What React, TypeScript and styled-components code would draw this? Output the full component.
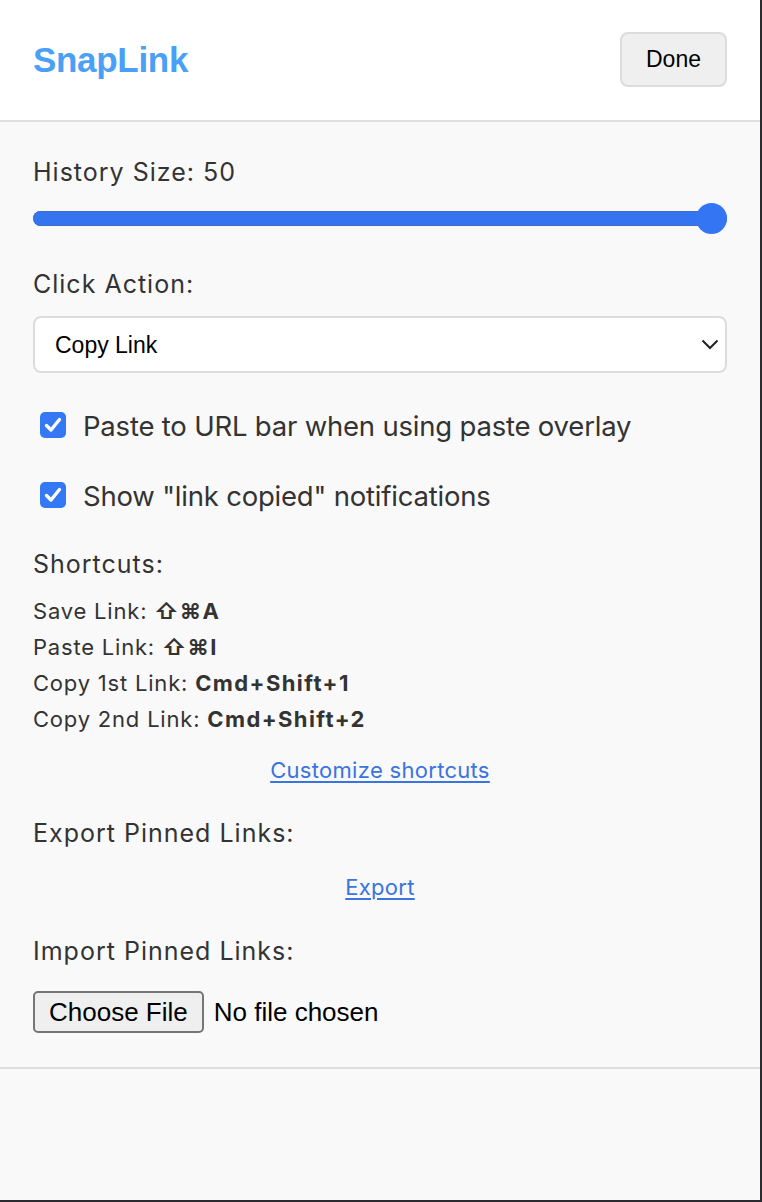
import React from "react";
import styled, { createGlobalStyle } from "styled-components";

const Global = createGlobalStyle`
  html, body { margin: 0; padding: 0; background: #2b2b2f; }
  * { box-sizing: border-box; }
  #root { width: 762px; height: 1202px; }
`;

const Frame = styled.div`
  width: 762px;
  height: 1202px;
  background: #2b2b2f;
  padding: 0 2px 2px 0;
`;

const Popup = styled.div`
  width: 760px;
  height: 1200px;
  background: #f9f9f9;
  display: flex;
  flex-direction: column;
  font-family: Inter, "Noto Sans", sans-serif;
  color: #333;
`;

const Header = styled.header`
  height: 122px;
  flex: none;
  background: #fff;
  border-bottom: 2px solid #dedede;
  padding: 0 33px;
  display: flex;
  align-items: center;
  justify-content: space-between;
`;

const Title = styled.h1`
  margin: 0;
  font-family: "Liberation Sans", Arial, sans-serif;
  font-weight: 700;
  font-size: 35px;
  color: #4a9ff6;
  letter-spacing: -0.3px;
`;

const DoneButton = styled.button`
  width: 107px;
  height: 55px;
  margin-top: -2px;
  background: #efefef;
  border: 2px solid #dcdcdc;
  border-radius: 8px;
  font-family: "Liberation Sans", Arial, sans-serif;
  font-size: 23px;
  color: #000;
`;

const Main = styled.main`
  padding: 35px 33px 34px;
  display: flex;
  flex-direction: column;
  border-bottom: 2px solid #dedede;
`;

const Label = styled.div<{ $gap?: number }>`
  font-size: 25px;
  letter-spacing: 1px;
  line-height: 30px;
  height: 30px;
  margin-top: ${(p) => p.$gap ?? 0}px;
`;

const Range = styled.input`
  -webkit-appearance: none;
  appearance: none;
  width: 100%;
  height: 31px;
  margin: 16px 0 0;
  background: transparent;
  &::-webkit-slider-runnable-track {
    height: 15px;
    border-radius: 8px;
    background: #3574f0;
    box-shadow: inset 0 1px 0 #3f6ec8, inset 0 -1px 0 #3f6ec8;
  }
  &::-webkit-slider-thumb {
    -webkit-appearance: none;
    width: 31px;
    height: 31px;
    border-radius: 50%;
    background: #3375f2;
    margin-top: -8px;
    border: none;
  }
`;

const SelectWrap = styled.div`
  position: relative;
  margin-top: 17px;
  height: 57px;
`;

const Select = styled.select`
  -webkit-appearance: none;
  appearance: none;
  width: 100%;
  height: 57px;
  background: #fff;
  border: 2px solid #dcdcdc;
  border-radius: 8px;
  padding: 0 0 0 20px;
  font-family: "Liberation Sans", Arial, sans-serif;
  font-size: 23px;
  color: #000;
`;

const Chevron = styled.svg`
  position: absolute;
  right: 8px;
  top: 23px;
  pointer-events: none;
`;

const CheckRow = styled.label<{ $gap: number }>`
  display: flex;
  align-items: center;
  height: 36px;
  margin-top: ${(p) => p.$gap}px;
  padding-left: 7px;
  gap: 17px;
  font-size: 27.5px;
  letter-spacing: -0.2px;
`;

const Box = styled.span`
  width: 26px;
  height: 26px;
  border-radius: 5px;
  background: #3478f6;
  display: flex;
  align-items: center;
  justify-content: center;
  margin-top: -3px;
  flex: none;
`;

const ShortcutList = styled.div`
  margin-top: 14px;
  display: flex;
  flex-direction: column;
`;

const ShortcutLine = styled.div`
  font-size: 22px;
  letter-spacing: 0.8px;
  line-height: 36px;
  height: 36px;
  b { font-weight: 700; letter-spacing: 1.4px; }
`;

const CenterLink = styled.a<{ $gap: number }>`
  align-self: center;
  margin-top: ${(p) => p.$gap}px;
  font-size: 22px;
  letter-spacing: 0.3px;
  line-height: 36px;
  color: #3a74e0;
  text-decoration: underline;
  text-underline-offset: 3px;
  cursor: pointer;
`;

const FileRow = styled.div`
  margin-top: 25px;
  display: flex;
  align-items: center;
  gap: 10px;
  font-family: "Liberation Sans", Arial, sans-serif;
  font-size: 26px;
  color: #000;
`;

const FileButton = styled.label`
  height: 42px;
  padding: 0 14px;
  display: flex;
  align-items: center;
  background: #efefef;
  border: 2px solid #767676;
  border-radius: 5px;
  cursor: pointer;
  input { display: none; }
`;

const Check = () => (
  <svg width="18" height="16" viewBox="0 0 18 16">
    <path d="M2.5 8.5 L7 13 L15.5 2.5" fill="none" stroke="#fff" strokeWidth="3.4" strokeLinecap="round" strokeLinejoin="round" />
  </svg>
);

export default function App() {
  return (
    <Frame>
      <Global />
      <Popup>
        <Header>
          <Title>SnapLink</Title>
          <DoneButton>Done</DoneButton>
        </Header>
        <Main>
          <Label>History Size: 50</Label>
          <Range type="range" min={1} max={50} defaultValue={50} />
          <Label $gap={35}>Click Action:</Label>
          <SelectWrap>
            <Select defaultValue="copy">
              <option value="copy">Copy Link</option>
              <option value="open">Open Link</option>
            </Select>
            <Chevron width="18" height="11" viewBox="0 0 18 11">
              <path d="M1.5 1.5 L9 9 L16.5 1.5" fill="none" stroke="#222" strokeWidth="2" />
            </Chevron>
          </SelectWrap>
          <CheckRow $gap={35}>
            <Box><Check /></Box>
            Paste to URL bar when using paste overlay
          </CheckRow>
          <CheckRow $gap={34}>
            <Box><Check /></Box>
            Show "link copied" notifications
          </CheckRow>
          <Label $gap={35}>Shortcuts:</Label>
          <ShortcutList>
            <ShortcutLine>Save Link: <b>⇧⌘A</b></ShortcutLine>
            <ShortcutLine>Paste Link: <b>⇧⌘I</b></ShortcutLine>
            <ShortcutLine>Copy 1st Link: <b>Cmd+Shift+1</b></ShortcutLine>
            <ShortcutLine>Copy 2nd Link: <b>Cmd+Shift+2</b></ShortcutLine>
          </ShortcutList>
          <CenterLink $gap={15}>Customize shortcuts</CenterLink>
          <Label $gap={30}>Export Pinned Links:</Label>
          <CenterLink $gap={21}>Export</CenterLink>
          <Label $gap={31}>Import Pinned Links:</Label>
          <FileRow>
            <FileButton>
              Choose File
              <input type="file" />
            </FileButton>
            <span>No file chosen</span>
          </FileRow>
        </Main>
      </Popup>
    </Frame>
  );
}
